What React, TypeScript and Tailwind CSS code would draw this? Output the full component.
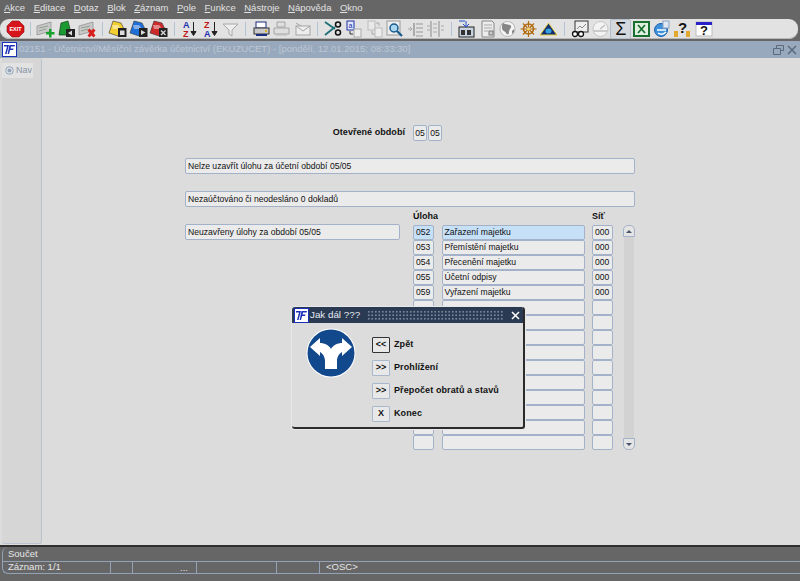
import type { ReactNode } from "react"

const font = "font-['Liberation_Sans',Arial,sans-serif]"

const menu = ["Akce", "Editace", "Dotaz", "Blok", "Záznam", "Pole", "Funkce", "Nástroje", "Nápověda", "Okno"]

function Ico({ children }: { children: ReactNode }) {
  return (
    <div className="flex h-[20px] w-[20.6px] shrink-0 items-center justify-center">
      <svg width="19" height="18" viewBox="0 0 19 18">
        {children}
      </svg>
    </div>
  )
}

function Sep() {
  return <div className="mx-[4.5px] h-[14px] w-px shrink-0 bg-[#b4c3d6]" />
}

function Logo() {
  return (
    <svg width="15" height="15" viewBox="0 0 15 15" className="shrink-0">
      <rect x="0.5" y="0.5" width="14" height="14" fill="#fff" stroke="#1c2fb8" />
      <path d="M2 3h5L4.5 12H3L5 4.5H2zM7.500 3H13l-.4 1.500H9l-.5 2h3l-.4 1.400h-3L7 12H5.600z" fill="#1c2fb8" />
    </svg>
  )
}

function Folder({ color, mark }: { color: string; mark: ReactNode }) {
  return (
    <Ico>
      <path d="M1 13 5 1l8 2 3 6-6 7z" fill={color} stroke="#333" strokeWidth=".6" />
      <path d="M4 5h6l3 4H5z" fill="#fff" opacity=".45" />
      <rect x="10" y="8" width="8.500" height="9" fill="#222" />
      {mark}
    </Ico>
  )
}

function Card({ children }: { children: ReactNode }) {
  return (
    <Ico>
      <path d="M1 6 15 2v9L1 15z" fill="#c9c9c9" stroke="#8a8a8a" strokeWidth=".7" />
      <path d="M3 8l9-2M3 11l7-2" stroke="#8f9f8f" strokeWidth="1" />
      {children}
    </Ico>
  )
}

function Toolbar() {
  return (
    <div className="mr-[2px] mt-[2px] flex h-[20px] items-center rounded-[9px] bg-[#e2e2e2] pl-[5px] shadow-[inset_0_-1px_0_#b8b8b8]">
      <Ico>
        <path d="M6 1h7l5 5v6l-5 5H6l-5-5V6z" fill="#d7141a" stroke="#8c0d10" strokeWidth=".6" />
        <text x="9.500" y="11" textAnchor="middle" fontSize="5.500" fontWeight="700" fill="#fff" fontFamily="Liberation Sans">EXIT</text>
      </Ico>
      <Sep />
      <Card>
        <path d="M13 9h2.500v3H18.500v2.500h-3V17.500H13v-3h-3V12h3z" fill="#17a02c" />
      </Card>
      <Ico>
        <path d="M2 15 4 3l7-2 2 8-4 6z" fill="#1c9a32" stroke="#0c3d16" strokeWidth=".7" />
        <rect x="9" y="9" width="9" height="8" fill="#222" />
        <path d="M11 13l4-2.500v5z" fill="#ddd" />
      </Ico>
      <Card>
        <path d="m9.500 10.500 2-2 2 2 2-2 2 2-2 2.500 2 2.500-2 2-2-2-2 2-2-2 2-2.500z" fill="#d8201e" />
      </Card>
      <Sep />
      <Folder color="#f2cf2e" mark={<rect x="12" y="10.500" width="4.500" height="4.500" fill="#ddd" />} />
      <Folder color="#1f6fd8" mark={<path d="M12 10l4.500 2.500-4.500 2.500z" fill="#ddd" />} />
      <Folder color="#cf2a2a" mark={<path d="m12 10.500 4.500 4.500m0-4.500-4.500 4.500" stroke="#ddd" strokeWidth="1.3" />} />
      <Sep />
      <Ico>
        <text x="3" y="8" fontSize="9" fontWeight="700" fill="#1b2fb0" fontFamily="Liberation Sans">A</text>
        <text x="3" y="17" fontSize="9" fontWeight="700" fill="#c01818" fontFamily="Liberation Sans">Z</text>
        <path d="M13.500 2v12M11 11.500l2.500 4 2.500-4z" stroke="#222" fill="#222" />
      </Ico>
      <Ico>
        <text x="3" y="8" fontSize="9" fontWeight="700" fill="#c01818" fontFamily="Liberation Sans">Z</text>
        <text x="3" y="17" fontSize="9" fontWeight="700" fill="#1b2fb0" fontFamily="Liberation Sans">A</text>
        <path d="M13.500 2v12M11 11.500l2.500 4 2.500-4z" stroke="#222" fill="#222" />
      </Ico>
      <Ico>
        <path d="M2 4h15l-6 6v6l-3-2v-4z" fill="#eee" stroke="#a8a8a8" />
      </Ico>
      <Sep />
      <Ico>
        <rect x="4" y="2" width="10" height="6" fill="#fff" stroke="#1c2a80" />
        <rect x="2" y="8" width="15" height="6" fill="#c9c9c9" stroke="#333" />
        <rect x="4" y="14" width="11" height="2" fill="#1c2a80" />
        <rect x="13" y="10" width="2" height="2" fill="#d8b020" />
      </Ico>
      <Ico>
        <path d="M5 2h8v5H5zM2 8h15v6H2z" fill="#dedede" stroke="#a5a5a5" />
        <path d="M4 15h11" stroke="#b8b8b8" />
      </Ico>
      <Ico>
        <rect x="3" y="6" width="14" height="9" fill="#eee" stroke="#a5a5a5" />
        <path d="m3 6 7 5 7-5M3 3l5 3" fill="none" stroke="#a5a5a5" />
      </Ico>
      <Sep />
      <Ico>
        <path d="M1 2l10 7M1 15 11 7" stroke="#1d6f78" strokeWidth="1.8" />
        <circle cx="14" cy="4.500" r="2.500" fill="none" stroke="#111" strokeWidth="1.5" />
        <circle cx="14" cy="12.500" r="2.500" fill="none" stroke="#111" strokeWidth="1.5" />
      </Ico>
      <Ico>
        <rect x="3" y="1" width="7" height="9" fill="#dfe6ff" stroke="#2030a0" />
        <text x="4.500" y="8" fontSize="7" fill="#2030a0" fontFamily="Liberation Sans">a</text>
        <rect x="10" y="9" width="7" height="8" fill="#eee" stroke="#aaa" />
        <path d="M6 11v3h3" fill="none" stroke="#333" />
      </Ico>
      <Ico>
        <rect x="3" y="1" width="7" height="9" fill="#e8e8e8" stroke="#bbb" />
        <rect x="10" y="8" width="7" height="9" fill="#eee" stroke="#bbb" />
        <path d="M7 11v3h3M11 3h3v3" fill="none" stroke="#aaa" />
      </Ico>
      <Ico>
        <rect x="2" y="1" width="13" height="14" fill="#eee" stroke="#999" />
        <circle cx="9" cy="8" r="4" fill="#a9d6ee" stroke="#185a8c" strokeWidth="1.5" />
        <path d="m12 11 5 5" stroke="#185a8c" strokeWidth="2.2" />
      </Ico>
      <Ico>
        <path d="M8 3v13" stroke="#999" strokeWidth="1.5" />
        <path d="M10 4h7M10 8h7M10 12h7M10 16h7" stroke="#999" />
        <path d="M2 9h4M4 7l2 2-2 2" stroke="#aaa" fill="none" />
      </Ico>
      <Ico>
        <path d="M5 1v16M13 1v16" stroke="#999" strokeWidth="1.2" />
        <path d="M7 4h4M7 8h4M7 12h4M15 6h3M15 10h3M1 6h3M1 10h3" stroke="#aaa" />
      </Ico>
      <Sep />
      <Ico>
        <rect x="2" y="7" width="15" height="10" fill="#c9d3df" stroke="#222" />
        <rect x="4" y="10" width="4" height="5" fill="#333" />
        <rect x="10" y="10" width="4" height="5" fill="#333" />
        <path d="M9 1v5M6 4l3 3 3-3M2 1h6" stroke="#1f4fc8" fill="none" />
      </Ico>
      <Ico>
        <path d="M4 1h10l2 2v14H4z" fill="#ececec" stroke="#888" />
        <path d="M6 5h8M6 8h8M6 11h4" stroke="#aaa" />
        <rect x="11" y="11" width="4" height="4" fill="#ccc" stroke="#777" />
      </Ico>
      <Ico>
        <circle cx="9.500" cy="9" r="7.500" fill="#f4f4f4" stroke="#b5b5b5" />
        <path d="M5 3c3 2 7 1 8 3s-2 3-2 6-2 3-3 1-4-2-4-5 0-4 1-5zM14 11l2-2v3l-2 2z" fill="#858585" />
      </Ico>
      <Ico>
        <circle cx="9.500" cy="9" r="5" fill="none" stroke="#b06a10" strokeWidth="1.6" />
        <path d="M9.500 1v16M1.500 9h16M4 3.500l11 11M15 3.500l-11 11" stroke="#b06a10" strokeWidth="1.2" />
        <circle cx="9.500" cy="9" r="1.800" fill="#f0d070" />
      </Ico>
      <Ico>
        <path d="M1 15 9.500 3 18 15z" fill="#12306f" stroke="#f0d040" />
        <ellipse cx="9.500" cy="11" rx="3" ry="2.500" fill="#37a0e0" />
      </Ico>
      <Sep />
      <Ico>
        <rect x="5" y="1" width="13" height="11" fill="#eee" stroke="#333" />
        <path d="M7 9l3-3 2 2 4-4" stroke="#888" fill="none" />
        <circle cx="5" cy="14" r="2.500" fill="#fff" stroke="#111" strokeWidth="1.3" />
        <circle cx="11" cy="14" r="2.500" fill="#fff" stroke="#111" strokeWidth="1.3" />
      </Ico>
      <Ico>
        <circle cx="9.500" cy="9" r="7.500" fill="#f3f3f3" stroke="#c4c4c4" />
        <path d="M3 11h13M9 9l5-4" stroke="#bdbdbd" strokeWidth="1.3" />
      </Ico>
      <div className="flex h-[20px] w-[20.6px] shrink-0 items-center justify-center rounded-[2px] border border-[#b3bfce] bg-[#d5d9de]">
        <span className="text-[18px] leading-none text-[#111]">Σ</span>
      </div>
      <Ico>
        <rect x="2" y="2" width="15" height="14" fill="#dff0e0" stroke="#17702f" strokeWidth="2" />
        <path d="m6 5 7 8m0-8-7 8" stroke="#17702f" strokeWidth="1.8" />
      </Ico>
      <Ico>
        <circle cx="9" cy="10" r="6.500" fill="#3d92dc" stroke="#1d5fa8" />
        <path d="M5 10h9M6 13c3 2 6 1 8-1" fill="none" stroke="#fff" strokeWidth="1.5" />
        <rect x="11" y="1" width="6" height="7" fill="#dfe8f4" stroke="#8ba2bf" />
      </Ico>
      <Ico>
        <text x="5" y="13" fontSize="15" fontWeight="700" fill="#111" fontFamily="Liberation Sans">?</text>
        <rect x="1" y="11" width="4" height="6" fill="#e3a92f" />
        <rect x="13" y="11" width="4" height="6" fill="#e3a92f" />
      </Ico>
      <Ico>
        <rect x="2" y="2" width="16" height="14" fill="#fff" stroke="#bbb" />
        <rect x="2" y="2" width="16" height="3" fill="#2a22c8" />
        <text x="6" y="15" fontSize="13" fontWeight="700" fill="#111" fontFamily="Liberation Sans">?</text>
      </Ico>
    </div>
  )
}

function Field({ className, text, tone }: { className: string; text?: string; tone?: string }) {
  return (
    <div
      className={
        "flex items-center overflow-hidden whitespace-nowrap rounded-[2px] border border-[#a3b2c8] px-[2px] text-[8.6px] leading-none text-[#111] " +
        (tone ?? "bg-[#ebebeb]") +
        " " +
        className
      }
    >
      {text}
    </div>
  )
}

const rows: [string, string, string][] = [
  ["052", "Zařazení majetku", "000"],
  ["053", "Přemístění majetku", "000"],
  ["054", "Přecenění majetku", "000"],
  ["055", "Účetní odpisy", "000"],
  ["059", "Vyřazení majetku", "000"],
  ...Array.from({ length: 10 }, (): [string, string, string] => ["", "", ""]),
]

function ScrollBar() {
  return (
    <div className="ml-[10px] flex w-[12px] flex-col">
      <div className="flex h-[12px] items-center justify-center rounded-t-[5px] border border-[#a3b2c8] bg-[#e4e4e4]">
        <div className="h-0 w-0 border-x-[3px] border-b-[3px] border-x-transparent border-b-[#48566a]" />
      </div>
      <div className="mx-auto w-[10px] flex-1 bg-[#d2d2d2]" />
      <div className="flex h-[12px] items-center justify-center rounded-b-[5px] border border-[#a3b2c8] bg-[#e4e4e4]">
        <div className="h-0 w-0 border-x-[3px] border-t-[3px] border-x-transparent border-t-[#48566a]" />
      </div>
    </div>
  )
}

function Form() {
  return (
    <div className="flex flex-col pl-[143px] pt-[67px]">
      <div className="flex h-[16px] w-[257px] items-center justify-end">
        <div className="whitespace-nowrap text-[9px] font-bold tracking-[0.05px] text-[#111]">Otevřené období</div>
        <div className="ml-[8px] flex shrink-0 gap-[1px]">
          <Field className="h-[16px] w-[14px] justify-center !px-0" text="05" />
          <Field className="h-[16px] w-[14px] justify-center !px-0" text="05" />
        </div>
      </div>
      <Field className="mt-[17px] h-[16px] w-[450px]" text="Nelze uzavřít úlohu za účetní období 05/05" />
      <Field className="mt-[17px] h-[16px] w-[450px]" text="Nezaúčtováno či neodesláno 0 dokladů" />
      <div className="flex">
        <div className="w-[228px] shrink-0 pt-[17px]">
          <Field className="h-[16px] w-[215px]" text="Neuzavřeny úlohy za období 05/05" />
        </div>
        <div className="flex flex-col">
          <div className="flex h-[18px] items-center pt-[1px] text-[9px] font-bold text-[#111]">
            <div className="w-[179px]">Úloha</div>
            <div>Síť</div>
          </div>
          <div className="flex">
            <div className="grid w-[200px] auto-rows-[15px] grid-cols-[21px_143px_21px] justify-between">
              {rows.map((r, i) => (
                <div key={i} className="contents">
                  <Field className="h-[15px]" text={r[0]} tone={i === 0 ? "bg-[#c6e0f8]" : undefined} />
                  <Field className="h-[15px]" text={r[1]} tone={i === 0 ? "bg-[#c6e0f8]" : undefined} />
                  <Field className="h-[15px]" text={r[2]} />
                </div>
              ))}
            </div>
            <ScrollBar />
          </div>
        </div>
      </div>
    </div>
  )
}

function DlgButton({ label, text, focused }: { label: string; text: string; focused?: boolean }) {
  return (
    <div className="flex h-[17px] items-center">
      <div
        className={
          "flex h-[16px] w-[18px] items-center justify-center rounded-[1px] bg-[#e8e8e8] text-[9px] font-bold leading-none text-[#111] " +
          (focused ? "border border-[#333]" : "border border-[#a9b8cc]")
        }
      >
        {label}
      </div>
      <div className="ml-[4px] whitespace-nowrap text-[9px] font-bold tracking-[0.1px] text-[#111]">{text}</div>
    </div>
  )
}

function Dialog() {
  return (
    <div className="absolute left-[292px] top-[307px] h-[122px] w-[233px] overflow-hidden rounded-[3px] border-b-2 border-r-2 border-[#2b2b2b] bg-[#dcdcdc] shadow-[0_0_0_1px_#e8e8e8]">
      <div className="flex h-[16px] items-center bg-[#2a3a52] pl-[2px] pr-[3px]">
        <Logo />
        <div className="whitespace-nowrap pl-[1px] text-[9.8px] text-[#e8ecf2]">Jak dál ???</div>
        <div className="mx-[7px] h-[10px] flex-1 bg-[radial-gradient(circle,#76859c_0.9px,transparent_1.1px)] bg-[length:3.5px_3.5px]" />
        <svg width="9" height="9" viewBox="0 0 9 9">
          <path d="m1 1 7 7m0-7-7 7" stroke="#fff" strokeWidth="1.5" />
        </svg>
      </div>
      <div className="flex">
        <div className="ml-[14px] mt-[5px] shrink-0">
          <svg width="50" height="50" viewBox="0 0 50 50">
            <circle cx="25" cy="25" r="24.5" fill="#fff" />
            <circle cx="25" cy="25" r="23.5" fill="#12488c" />
            <path
              d="M19 41V33C19 28 16 25 14 24V28L4 19 14 10V15C18 15 23 17 25 21 27 17 32 15 36 15V10L46 19 36 28V24C34 25 31 28 31 33V41Z"
              fill="#fff"
            />
          </svg>
        </div>
        <div className="ml-[16px] mt-[13px] flex flex-col gap-[6px]">
          <DlgButton label="<<" text="Zpět" focused />
          <DlgButton label=">>" text="Prohlížení" />
          <DlgButton label=">>" text="Přepočet obratů a stavů" />
          <DlgButton label="X" text="Konec" />
        </div>
      </div>
    </div>
  )
}

function StatusBar() {
  return (
    <div className="h-[36px] border-t-2 border-[#2f2f2f] bg-[#666666] text-[9.5px] text-[#e6e6e6]">
      <div className="ml-[2px] flex h-[14px] items-center rounded-tl-[6px] border-l border-[#93a2b6] pl-[5px]">Součet</div>
      <div className="ml-[2px] flex h-[13px] items-center rounded-bl-[6px] border-y border-l border-[#93a2b6] pl-[5px]">
        <div className="flex h-full w-[103px] items-center border-r border-[#93a2b6]">Záznam: 1/1</div>
        <div className="h-full w-[22px] border-r border-[#93a2b6]" />
        <div className="flex h-full w-[64px] items-end justify-end border-r border-[#93a2b6] pr-[8px] leading-[10px]">...</div>
        <div className="h-full w-[80px] border-r border-[#93a2b6]" />
        <div className="h-full w-[43px] border-r border-[#93a2b6]" />
        <div className="pl-[6px]">{"<OSC>"}</div>
      </div>
    </div>
  )
}

export default function App() {
  return (
    <div className={font + " relative flex h-[581px] w-[800px] flex-col overflow-hidden bg-[#666666]"}>
      <div className="flex h-[17px] items-center gap-[8.5px] pl-[4px] text-[9.5px] text-[#e2e2e2]">
        {menu.map((m) => (
          <span key={m} className="whitespace-nowrap">
            <span className="underline">{m[0]}</span>
            {m.slice(1)}
          </span>
        ))}
      </div>
      <Toolbar />
      <div className="mt-[2px] flex h-[17px] items-center bg-[#99a9bd] pl-[2px] pr-[3px]">
        <Logo />
        <div className="ml-[2px] flex-1 whitespace-nowrap text-[9.5px] text-[#bcc7d4]">
          02151 - Účetnictví/Měsíční závěrka účetnictví (EKUZUCET) - [pondělí, 12.01.2015; 08:33:30]
        </div>
        <svg width="11" height="10" viewBox="0 0 11 10" className="mr-[3px]">
          <path d="M3.5 3V.5h7v5H8M.5 3.500h7v6h-7z" fill="none" stroke="#5c6a7c" />
        </svg>
        <svg width="10" height="10" viewBox="0 0 10 10">
          <path d="m1 1 8 8m0-8-8 8" stroke="#5c6a7c" strokeWidth="1.5" />
        </svg>
      </div>
      <div className="flex flex-1 bg-[#dcdcdc]">
        <div className="mb-[1px] ml-[2px] w-[40px] rounded-b-[3px] rounded-tr-[3px] border-r border-b border-[#b9c2cf] bg-[#d6d6d6] pt-[5px]">
          <div className="flex h-[15px] w-[31px] items-center bg-[#e2e2e2] pl-[3px] text-[9px] text-[#8794a6]">
            <svg width="9" height="9" viewBox="0 0 9 9" className="mr-[2px]">
              <circle cx="4.5" cy="4.5" r="3.8" fill="#dfe5ec" stroke="#94a3b6" />
              <circle cx="4.5" cy="4.5" r="2" fill="#94a3b6" />
            </svg>
            Nav
          </div>
        </div>
        <Form />
      </div>
      <StatusBar />
      <Dialog />
    </div>
  )
}
